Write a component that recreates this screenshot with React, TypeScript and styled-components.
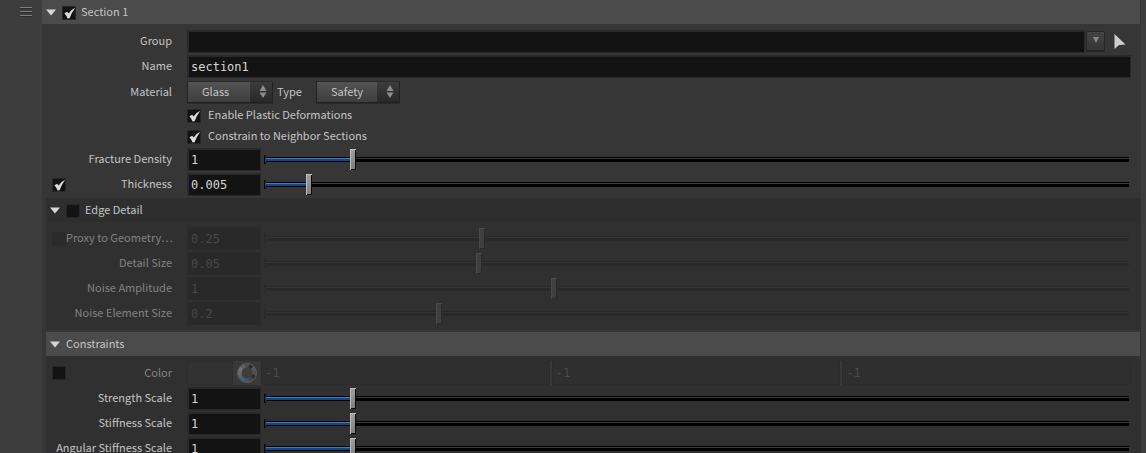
import React, { useId, useState } from "react";
import styled, { createGlobalStyle, css } from "styled-components";

const SANS = `"Noto Sans CJK SC", "Noto Sans", sans-serif`;
const MONO = `"DejaVu Sans Mono", monospace`;

const GlobalStyle = createGlobalStyle`
  *, *::before, *::after { box-sizing: border-box; }
  body {
    margin: 0;
    background: #3d3d3d;
    color: #c4c4c4;
    font: 11px/20px ${SANS};
  }
  input, select, button { font: inherit; color: inherit; margin: 0; }
`;

const Page = styled.main`
  display: flex;
  height: 100vh;
  padding-right: 5px;
  overflow: hidden;
`;

const Gutter = styled.aside`
  flex: 0 0 42px;
  padding: 6px 0 0 20px;
`;

const HandleButton = styled.button`
  display: block;
  padding: 0;
  border: 0;
  background: none;
  line-height: 0;
`;

const Panel = styled.section`
  flex: 1;
  min-width: 0;
  background: #363636;
`;

const SubPanel = styled.section`
  margin: 2px 0 0 4px;
  background: #303030;
`;

const Header = styled.header<{ $tone: "light" | "dark" }>`
  display: flex;
  align-items: center;
  height: 24px;
  margin-right: 1px;
  padding-left: 4px;
  background: ${(p) => (p.$tone === "light" ? "#4b4b4b" : "#2e2e2e")};
`;

const FoldButton = styled.button`
  flex: none;
  width: 10px;
  padding: 0;
  border: 0;
  background: none;
  line-height: 0;
`;

const titleText = css`
  padding-bottom: 2px;
  white-space: nowrap;
`;

const Title = styled.h2`
  margin: 0 0 0 6px;
  font: inherit;
  ${titleText}
`;

const TitleLabel = styled.label`
  ${titleText}
  margin-left: 5px;
`;

const HeaderCheck = styled.span`
  display: flex;
  margin-left: 6px;
  padding-top: 2px;
`;

const Rows = styled.div<{ $inset?: boolean }>`
  display: flex;
  flex-direction: column;
  gap: 2px;
  padding: ${(p) => (p.$inset ? "5px 10px 5px 0" : "6px 10px 0 0")};
`;

const Row = styled.div<{ $inset?: boolean; $dim?: boolean; $tall?: boolean }>`
  display: grid;
  grid-template-columns: ${(p) => (p.$inset ? "126px" : "130px")} minmax(0, 1fr);
  column-gap: 15px;
  align-items: center;
  height: ${(p) => (p.$tall ? "24px" : "23px")};
  color: ${(p) => (p.$dim ? "#828282" : "#c4c4c4")};
`;

const LabelCell = styled.div<{ $inset?: boolean }>`
  display: flex;
  align-items: center;
  justify-content: space-between;
  padding-left: ${(p) => (p.$inset ? "6px" : "10px")};
`;

const rowText = css`
  padding-bottom: 3px;
  line-height: 18px;
  white-space: nowrap;
`;

const Label = styled.label`
  ${rowText}
  margin-left: auto;
`;

const CheckLabel = styled.label`
  ${rowText}
`;

const Field = styled.div`
  display: flex;
  align-items: center;
  min-width: 0;
`;

const inputLook = css`
  height: 23px;
  padding: 0 2px 1px;
  border: 2px solid #292929;
  border-right-width: 1px;
  border-bottom-width: 1px;
  border-radius: 0;
  outline: 0;
  background: #131313;
  color: #d6d6d6;
  font: 12px/18px ${MONO};

  &:disabled {
    border-color: #2b2b2b;
    background: #292929;
    color: #484848;
  }
`;

const WideInput = styled.input`
  ${inputLook}
  flex: 1;
  min-width: 0;
`;

const NumberInput = styled.input`
  ${inputLook}
  flex: none;
  width: 74px;
`;

const CheckFrame = styled.span`
  position: relative;
  display: block;
  flex: none;
  width: 14px;
  height: 14px;

  svg {
    position: absolute;
    inset: 0;
    pointer-events: none;
  }
`;

const CheckInput = styled.input`
  display: block;
  appearance: none;
  width: 14px;
  height: 14px;
  border: 1px solid #272727;
  background: #131313;

  &:disabled {
    border-color: #2c2c2c;
    background: #2b2b2b;
  }
`;

const CheckLine = styled.div`
  display: flex;
  align-items: center;
  gap: 7px;
  height: 19px;
  padding-left: 145px;
`;

const SelectFrame = styled.span<{ $wide?: boolean }>`
  position: relative;
  display: block;
  flex: none;
  width: ${(p) => (p.$wide ? "86px" : "84px")};
  height: 22px;

  svg {
    position: absolute;
    top: 4px;
    right: 6px;
    pointer-events: none;
  }
`;

const Select = styled.select`
  appearance: none;
  display: block;
  width: 100%;
  height: 22px;
  padding: 0 0 3px 14px;
  border: 1px solid #222;
  border-top-color: #2a2a2a;
  border-radius: 1px;
  outline: 0;
  background:
    linear-gradient(#3c3c3c, #282828) right / 22px 100% no-repeat,
    linear-gradient(#535353, #3e3e3e);
  box-shadow: 0 1px 0 #2a2a2a;
  line-height: 16px;
`;

const InlineLabel = styled.label`
  ${rowText}
  width: 43px;
  padding-left: 4px;
`;

const MenuButton = styled.button`
  display: flex;
  align-items: center;
  justify-content: center;
  flex: none;
  width: 19px;
  height: 20px;
  margin: 0 8px 2px 1px;
  padding: 0 0 1px;
  border: 1px solid #272727;
  border-radius: 1px;
  background: linear-gradient(#444, #353535);
  box-shadow: 0 1px 0 #222;
`;

const PickButton = styled.button`
  flex: none;
  width: 18px;
  padding: 0 0 2px;
  border: 0;
  background: none;
  line-height: 0;
  text-align: left;
`;

const SliderFrame = styled.span<{ $dim?: boolean }>`
  display: flex;
  flex: 1;
  align-items: center;
  min-width: 0;
  padding: 0 2px 0 3px;

  &::before {
    content: "";
    width: 2px;
    height: 9px;
    border: 1px solid ${(p) => (p.$dim ? "#292929" : "#000")};
    border-right: 0;
    border-radius: 1px 0 0 1px;
  }
`;

const thumbLook = css`
  appearance: none;
  width: 6px;
  height: 21px;
  border: 0;
  border-radius: 0;
  background: linear-gradient(#a0a0a0, #7c7c7c);
  box-shadow:
    inset 1px 1px 0 #bcbcbc,
    inset -1px -1px 0 #0a0a0a;
`;

const Range = styled.input`
  appearance: none;
  flex: 1;
  min-width: 0;
  height: 21px;
  outline: 0;
  border-radius: 0;
  background:
    linear-gradient(#000 1px, #5c7590 1px 2px, #05499a 2px 4px, #000 4px) left center / var(--fill) 5px no-repeat,
    linear-gradient(#000 1px, #3c3c3c 1px 2px, #000 2px) center / 100% 5px no-repeat;

  &::-webkit-slider-thumb { ${thumbLook} }
  &::-moz-range-thumb { ${thumbLook} }

  &:disabled {
    background: linear-gradient(#292929 1px, #343434 1px 2px, #292929 2px) center / 100% 5px no-repeat;
  }

  &:disabled::-webkit-slider-thumb {
    background: #3f3f3f;
    box-shadow:
      inset 1px 1px 0 #4a4a4a,
      inset -1px -1px 0 #292929;
  }
`;

const ColorField = styled.div`
  display: flex;
  align-self: center;
  height: 24px;
`;

const Swatch = styled.button`
  flex: none;
  width: 46px;
  border: 1px solid #2d2d2d;
  background: #323232;
  padding: 0;
`;

const WheelButton = styled.button`
  display: flex;
  align-items: center;
  justify-content: center;
  flex: none;
  width: 28px;
  padding: 0;
  border: 0;
  background: #393939;
`;

const Channels = styled.div`
  display: flex;
  flex: 1;
  gap: 2px;
  min-width: 0;
  background: #3a3a3a;
`;

const ChannelInput = styled.input`
  ${inputLook}
  flex: 1;
  min-width: 0;
  height: 24px;
  padding-left: 3px;
  border-width: 1px;

  &:disabled {
    border-color: #2c2c2c;
    background: #2f2f2f;
    color: #4a4a4a;
  }
`;

function Check({ id, on = false, disabled, name }: { id?: string; on?: boolean; disabled?: boolean; name?: string }) {
  const [checked, setChecked] = useState(on);
  return (
    <CheckFrame>
      <CheckInput
        id={id}
        type="checkbox"
        aria-label={name}
        checked={checked}
        disabled={disabled}
        onChange={(e) => setChecked(e.target.checked)}
      />
      {checked && (
        <svg width="14" height="14" viewBox="0 0 14 14" aria-hidden="true">
          <path d="M2.4 7.2 5.2 5.8 6.6 7.4Q9 3.6 13.2 1.8Q9.8 6.4 7.6 12.2L5.6 12.6Q4.4 9.4 2.4 7.2Z" fill="#dcdcdc" />
        </svg>
      )}
    </CheckFrame>
  );
}

function Fold({ name }: { name: string }) {
  return (
    <FoldButton type="button" aria-label={`Collapse ${name}`}>
      <svg width="10" height="7" viewBox="0 0 10 7">
        <path d="M0 0.5H10L5 6.5Z" fill="#d6d6d6" />
      </svg>
    </FoldButton>
  );
}

interface SliderRowProps {
  label: string;
  value: string;
  position: number;
  inset?: boolean;
  dim?: boolean;
  toggle?: "on" | "off";
}

function SliderRow({ label, value, position, inset, dim, toggle }: SliderRowProps) {
  const id = useId();
  const [text, setText] = useState(value);
  const [pos, setPos] = useState(position);
  return (
    <Row $inset={inset} $dim={dim}>
      <LabelCell $inset={inset}>
        {toggle && <Check on={toggle === "on"} disabled={dim} name={`Use ${label}`} />}
        <Label htmlFor={id}>{label}</Label>
      </LabelCell>
      <Field>
        <NumberInput id={id} value={text} disabled={dim} onChange={(e) => setText(e.target.value)} />
        <SliderFrame $dim={dim}>
          <Range
            type="range"
            min={0}
            max={1000}
            value={pos}
            disabled={dim}
            aria-label={`${label} slider`}
            onChange={(e) => setPos(Number(e.target.value))}
            style={{ "--fill": `${pos / 10}%` } as React.CSSProperties}
          />
        </SliderFrame>
      </Field>
    </Row>
  );
}

function Menu({ id, options, wide }: { id: string; options: string[]; wide?: boolean }) {
  return (
    <SelectFrame $wide={wide}>
      <Select id={id}>
        {options.map((o) => (
          <option key={o}>{o}</option>
        ))}
      </Select>
      <svg width="8" height="13" viewBox="0 0 8 13" aria-hidden="true">
        <path d="M4 0 7.5 6H0.5ZM0.5 7.5H7.5L4 13Z" fill="#8c8c8c" />
      </svg>
    </SelectFrame>
  );
}

function ColorWheel() {
  const tones = ["#4c4c4c", "#2b2b2b", "#555", "#4c4c4c", "#2e2e2e", "#444", "#3c5878", "#3f5f86", "#5c6066", "#6c6c6c", "#747474", "#606060"];
  return (
    <svg width="20" height="20" viewBox="0 0 20 20" aria-hidden="true">
      <circle cx="10" cy="10" r="9.5" fill="#555" />
      {tones.map((tone, i) => (
        <path key={i} d="M10 10 7.7 1.3A9 9 0 0 1 12.3 1.3Z" fill={tone} transform={`rotate(${i * 30} 10 10)`} />
      ))}
      <circle cx="10" cy="10" r="5.5" fill="#3e3e3e" />
      <circle cx="10" cy="10" r="9.5" fill="none" stroke="#5c5c5c" />
    </svg>
  );
}

export default function App() {
  const [group, setGroup] = useState("");
  const [name, setName] = useState("section1");
  return (
    <>
      <GlobalStyle />
      <Page>
        <Gutter>
          <HandleButton type="button" aria-label="Reorder section">
            <svg width="12" height="11" viewBox="0 0 12 11">
              <path d="M0 1.5H12M0 5.5H12M0 9.5H12" stroke="#7e7e7e" />
              <path d="M0 2.5H12M0 6.5H12M0 10.5H12" stroke="#2d2d2d" />
            </svg>
          </HandleButton>
        </Gutter>
        <Panel>
          <Header $tone="light">
            <Fold name="Section 1" />
            <HeaderCheck>
              <Check id="section" on />
            </HeaderCheck>
            <TitleLabel htmlFor="section">Section 1</TitleLabel>
          </Header>
          <Rows>
            <Row>
              <LabelCell>
                <Label htmlFor="group">Group</Label>
              </LabelCell>
              <Field>
                <WideInput id="group" value={group} onChange={(e) => setGroup(e.target.value)} />
                <MenuButton type="button" aria-label="Group menu">
                  <svg width="8" height="6" viewBox="0 0 8 6">
                    <path d="M1 0H7L4 6Z" fill="#8a8a8a" />
                  </svg>
                </MenuButton>
                <PickButton type="button" aria-label="Pick geometry">
                  <svg width="14" height="18" viewBox="0 0 14 18">
                    <path d="M1.5 2V17L6 13 12.5 12.5Z" fill="#cecece" />
                  </svg>
                </PickButton>
              </Field>
            </Row>
            <Row>
              <LabelCell>
                <Label htmlFor="name">Name</Label>
              </LabelCell>
              <Field>
                <WideInput id="name" value={name} onChange={(e) => setName(e.target.value)} />
              </Field>
            </Row>
            <Row $tall>
              <LabelCell>
                <Label htmlFor="material">Material</Label>
              </LabelCell>
              <Field>
                <Menu id="material" options={["Glass", "Concrete", "Wood"]} wide />
                <InlineLabel htmlFor="type">Type</InlineLabel>
                <Menu id="type" options={["Safety", "Tempered"]} />
              </Field>
            </Row>
            <CheckLine>
              <Check id="plastic" on />
              <CheckLabel htmlFor="plastic">Enable Plastic Deformations</CheckLabel>
            </CheckLine>
            <CheckLine>
              <Check id="neighbor" on />
              <CheckLabel htmlFor="neighbor">Constrain to Neighbor Sections</CheckLabel>
            </CheckLine>
            <SliderRow label="Fracture Density" value="1" position={98} />
            <SliderRow label="Thickness" value="0.005" position={47} toggle="on" />
          </Rows>
          <SubPanel>
            <Header $tone="dark">
              <Fold name="Edge Detail" />
              <HeaderCheck>
                <Check id="edge" />
              </HeaderCheck>
              <TitleLabel htmlFor="edge">Edge Detail</TitleLabel>
            </Header>
            <Rows $inset>
              <SliderRow label="Proxy to Geometry…" value="0.25" position={248} inset dim toggle="off" />
              <SliderRow label="Detail Size" value="0.05" position={245} inset dim />
              <SliderRow label="Noise Amplitude" value="1" position={332} inset dim />
              <SliderRow label="Noise Element Size" value="0.2" position={198} inset dim />
            </Rows>
          </SubPanel>
          <SubPanel>
            <Header $tone="light">
              <Fold name="Constraints" />
              <Title>Constraints</Title>
            </Header>
            <Rows $inset>
              <Row $inset $dim $tall>
                <LabelCell $inset>
                  <Check name="Use Color" />
                  <Label htmlFor="color-r">Color</Label>
                </LabelCell>
                <ColorField>
                  <Swatch type="button" disabled aria-label="Color swatch" />
                  <WheelButton type="button" disabled aria-label="Color picker">
                    <ColorWheel />
                  </WheelButton>
                  <Channels>
                    <ChannelInput id="color-r" defaultValue="-1" disabled />
                    <ChannelInput aria-label="Green" defaultValue="-1" disabled />
                    <ChannelInput aria-label="Blue" defaultValue="-1" disabled />
                  </Channels>
                </ColorField>
              </Row>
              <SliderRow label="Strength Scale" value="1" position={98} inset />
              <SliderRow label="Stiffness Scale" value="1" position={98} inset />
              <SliderRow label="Angular Stiffness Scale" value="1" position={98} inset />
            </Rows>
          </SubPanel>
        </Panel>
      </Page>
    </>
  );
}
